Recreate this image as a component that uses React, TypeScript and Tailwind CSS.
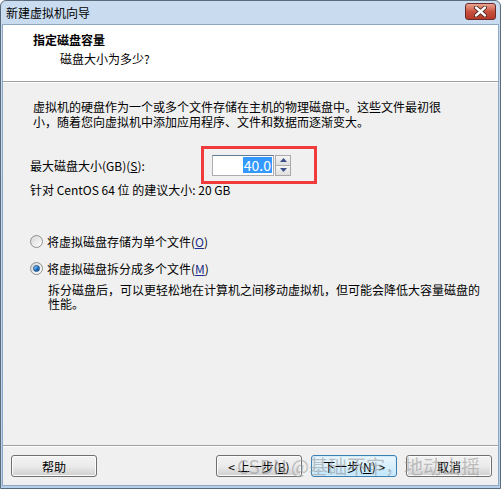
import React from "react";

const font = { fontFamily: '"Noto Sans CJK SC", "Noto Sans", sans-serif' };

function Radio({ checked }: { checked?: boolean }) {
  return (
    <span className="relative inline-flex w-[13px] h-[13px] rounded-full border border-[#8e8f8f] bg-gradient-to-br from-[#d6d6d6] to-[#ffffff] items-center justify-center">
      {checked && (
        <span className="w-[7px] h-[7px] rounded-full bg-gradient-to-br from-[#b6e0fa] via-[#2a7fd4] to-[#0d3f8a] border border-[#1d5489]" />
      )}
    </span>
  );
}

function Button({
  children,
  primary,
}: {
  children: React.ReactNode;
  primary?: boolean;
}) {
  return (
    <div
      className={
        "w-[86px] h-[22px] rounded-[3px] border flex items-center justify-center text-[12px] text-black " +
        (primary
          ? "border-[#3c7fb1] bg-gradient-to-b from-[#eaf6fd] via-[#d9f0fc] to-[#bee6fd] shadow-[inset_0_0_0_1px_#d6ecfa]"
          : "border-[#707070] bg-gradient-to-b from-[#f2f2f2] via-[#ebebeb] to-[#cfcfcf] shadow-[inset_0_0_0_1px_#fcfcfc]")
      }
    >
      {children}
    </div>
  );
}

export default function App() {
  return (
    <div className="w-[503px] h-[490px] bg-white" style={font}>
      <div className="relative w-[501px] h-[489px] flex flex-col border border-[#5a6b7c] rounded-t-[6px] bg-gradient-to-b from-[#c9dcf0] to-[#b7cfe8] overflow-hidden">
        {/* title bar */}
        <div className="h-[23px] flex items-center justify-between pl-[5px] pr-[4px] shrink-0">
          <span className="text-[12px] text-black leading-none mt-[1px]">新建虚拟机向导</span>
          <div className="w-[31px] h-[17px] mt-[-2px] rounded-[3px] border border-[#6a2a2a] bg-gradient-to-b from-[#e8a593] via-[#c9533f] to-[#b5382a] flex items-center justify-center">
            <svg width="13" height="11" viewBox="0 0 13 11">
              <path
                d="M2 1.5 L11 9.5 M11 1.5 L2 9.5"
                stroke="#3b1a16"
                strokeWidth="4"
                strokeLinecap="round"
              />
              <path
                d="M2 1.5 L11 9.5 M11 1.5 L2 9.5"
                stroke="#ffffff"
                strokeWidth="2.4"
                strokeLinecap="round"
              />
            </svg>
          </div>
        </div>

        {/* client area */}
        <div className="flex-1 flex flex-col mx-[1px] mb-[2px] border border-[#8fa7c2] bg-[#f0f0f0]">
          <div className="h-[57px] bg-white border-b border-[#a0a0a0] pl-[30px] pt-[7px] shrink-0">
            <div className="text-[12px] font-bold leading-[16px] text-black">指定磁盘容量</div>
            <div className="text-[12px] leading-[16px] text-black pl-[27px] mt-[3px]">磁盘大小为多少?</div>
          </div>
          <div className="border-t border-white" />

          <div className="flex-1 flex flex-col text-[12px] text-black leading-[15px]">
            <div className="pl-[30px] pt-[16px] pr-[20px]">
              <p>虚拟机的硬盘作为一个或多个文件存储在主机的物理磁盘中。这些文件最初很</p>
              <p>小，随着您向虚拟机中添加应用程序、文件和数据而逐渐变大。</p>
            </div>

            <div className="flex items-center pl-[27px] mt-[17px]">
              <span className="w-[171px]">
                最大磁盘大小(GB)(<span className="underline">S</span>):
              </span>
              <div className="w-[116px] h-[38px] border-[3px] border-[#ef3b3b] flex items-center pl-[8px]">
                <div className="w-[62px] h-[21px] bg-white border border-[#abadb3] border-t-[#5d7a97] flex items-center justify-end pr-[1px]">
                  <span className="bg-[#3399ff] text-white text-[14px] leading-[16px] px-[1px]">40.0</span>
                </div>
                <div className="flex flex-col ml-[1px] w-[16px] h-[21px] border border-[#a9a9a9]">
                  <div className="flex-1 flex items-center justify-center bg-gradient-to-b from-[#f6f6f6] to-[#dedede] border-b border-[#b0b0b0]">
                    <svg width="7" height="4" viewBox="0 0 7 4"><path d="M0 4 L3.5 0 L7 4Z" fill="#3d4f8a" /></svg>
                  </div>
                  <div className="flex-1 flex items-center justify-center bg-gradient-to-b from-[#f6f6f6] to-[#dedede]">
                    <svg width="7" height="4" viewBox="0 0 7 4"><path d="M0 0 L3.5 4 L7 0Z" fill="#3d4f8a" /></svg>
                  </div>
                </div>
              </div>
            </div>

            <div className="pl-[27px] mt-[-2px]">针对 CentOS 64 位 的建议大小: 20 GB</div>

            <div className="flex items-center gap-[4px] pl-[27px] mt-[37px]">
              <Radio />
              <span>
                将虚拟磁盘存储为单个文件(<span className="underline text-[#1a2e8a]">O</span>)
              </span>
            </div>
            <div className="flex items-center gap-[4px] pl-[27px] mt-[12px]">
              <Radio checked />
              <span>
                将虚拟磁盘拆分成多个文件(<span className="underline text-[#1a2e8a]">M</span>)
              </span>
            </div>
            <div className="pl-[45px] mt-[7px] leading-[14px]">
              <p>拆分磁盘后，可以更轻松地在计算机之间移动虚拟机，但可能会降低大容量磁盘的</p>
              <p>性能。</p>
            </div>

            <div className="flex-1" />
            <div className="border-t border-[#a0a0a0]" />
            <div className="border-t border-white" />
            <div className="relative h-[38px] flex items-center pl-[8px] pr-[6px]">
              <Button>帮助</Button>
              <div className="flex-1" />
              <div className="flex gap-[9px]">
                <Button>
                  &lt; 上一步(<span className="underline">B</span>)
                </Button>
                <Button primary>
                  下一步(<span className="underline">N</span>) &gt;
                </Button>
                <Button>取消</Button>
              </div>
              <div className="absolute left-[234px] top-[7px] text-[19px] leading-[24px] text-[#9a9a9a]/60 whitespace-nowrap pointer-events-none">
                CSDN @基础不牢，地动山摇
              </div>
            </div>
          </div>
        </div>
      </div>
    </div>
  );
}
